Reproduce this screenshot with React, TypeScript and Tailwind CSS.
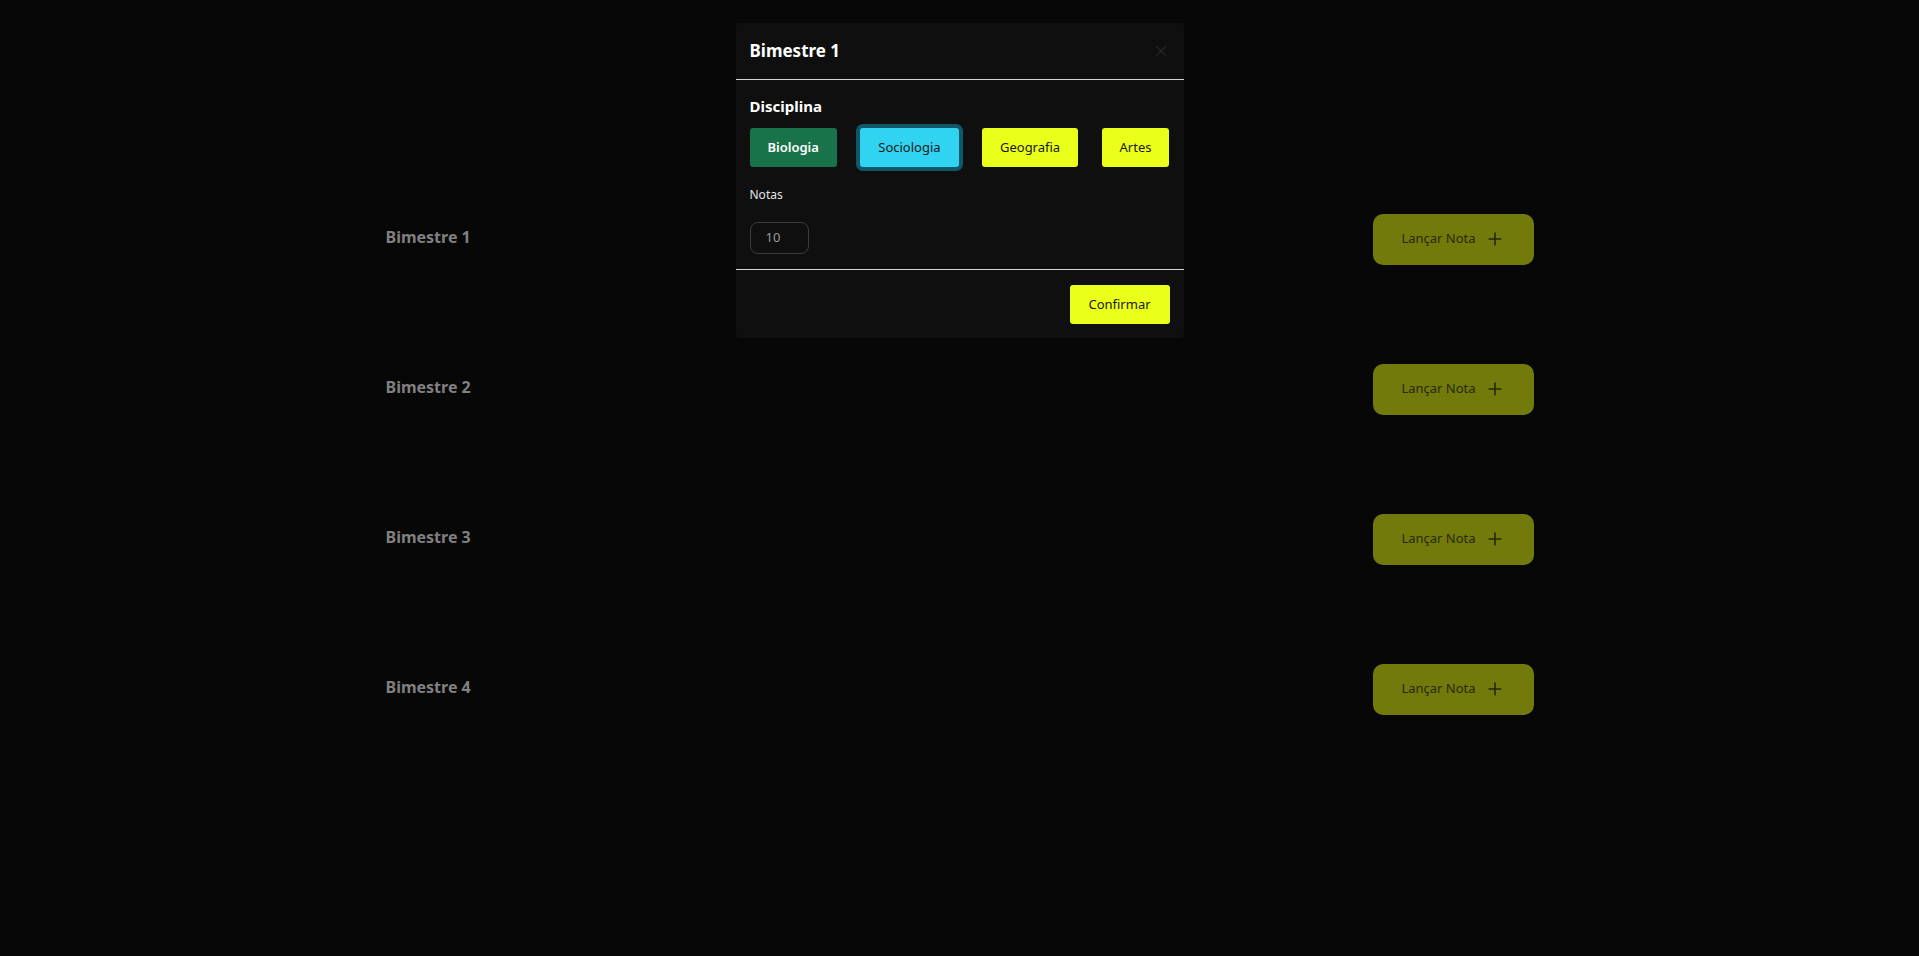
import { Plus, X } from "lucide-react";

const bimestres = ["Bimestre 1", "Bimestre 2", "Bimestre 3", "Bimestre 4"];

function LancarButton() {
    return (
        <button className="flex items-center gap-[9px] h-[51px] w-[161px] justify-center rounded-[10px] bg-[#737a0c] text-[13px] text-[#272907]">
            <span>Lançar Nota</span>
            <Plus className="w-[20px] h-[20px]" strokeWidth={2} />
        </button>
    );
}

function Modal() {
    return (
        <div className="fixed inset-0 flex justify-center pt-[23px]">
            <div className="w-[448px] h-fit bg-[#0f0f0f] rounded-[3px] text-white">
                <div className="h-[57px] px-[14px] flex items-center justify-between border-b border-[#d6d6d6]">
                    <h2 className="text-[17px] font-bold">Bimestre 1</h2>
                    <X className="w-[18px] h-[18px] text-[#262626]" strokeWidth={1.5} />
                </div>
                <div className="px-[14px] pt-[16px] pb-[15px]">
                    <p className="text-[15px] font-bold leading-5">Disciplina</p>
                    <div className="mt-[12px] flex justify-between text-[13px]">
                        <button className="h-[39px] px-[18px] rounded-[3px] bg-[#18734a] text-white font-semibold">Biologia</button>
                        <button className="h-[39px] px-[18px] rounded-[3px] bg-[#30d3f0] text-[#1a1a1a] ring-4 ring-[#11576a]">Sociologia</button>
                        <button className="h-[39px] px-[18px] rounded-[3px] bg-[#eaff1a] text-[#1a1a1a]">Geografia</button>
                        <button className="h-[39px] px-[18px] rounded-[3px] bg-[#eaff1a] text-[#1a1a1a]">Artes</button>
                    </div>
                    <p className="mt-[20px] text-[12px] leading-4 text-[#e5e5e5]">Notas</p>
                    <div className="mt-[19px] w-[59px] h-[32px] rounded-[8px] border border-[#3b3b3b] flex items-center pl-[15px] text-[13px] text-[#9a9a9a]">
                        10
                    </div>
                </div>
                <div className="border-t border-[#d6d6d6] px-[14px] pt-[15px] pb-[14px] flex justify-end">
                    <button className="h-[39px] w-[100px] rounded-[3px] bg-[#eaff1a] text-[13px] text-[#1a1a1a]">Confirmar</button>
                </div>
            </div>
        </div>
    );
}

export default function App() {
    return (
        <div className="min-h-[956px] bg-[#070707] font-['Noto_Sans',sans-serif]">
            <div className="max-w-[1148px] mx-auto pt-[164px]">
                {bimestres.map((b) => (
                    <div key={b} className="h-[150px] flex items-center justify-between">
                        <span className="text-[16px] font-bold text-[#808080] -mt-[5px]">{b}</span>
                        <LancarButton />
                    </div>
                ))}
            </div>
            <Modal />
        </div>
    );
}
